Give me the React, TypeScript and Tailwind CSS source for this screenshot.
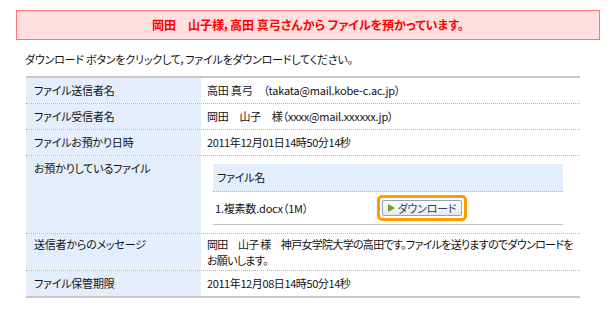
const rows: { label: string; value: React.ReactNode; kind?: 'files' | 'msg' }[] = [
  { label: 'ファイル送信者名', value: '高田 真弓　（takata@mail.kobe-c.ac.jp）' },
  { label: 'ファイル受信者名', value: '岡田　山子　様（xxxx@mail.xxxxxx.jp）' },
  { label: 'ファイルお預かり日時', value: <span className="tracking-[-0.4px]">2011年12月01日14時50分14秒</span> },
  { label: 'お預かりしているファイル', value: null, kind: 'files' },
  {
    label: '送信者からのメッセージ',
    value: (
      <>
        岡田　山子 様　神戸女学院大学の高田です。ファイルを送りますのでダウンロードを
        <br />
        お願いします。
      </>
    ),
    kind: 'msg',
  },
  { label: 'ファイル保管期限', value: <span className="tracking-[-0.4px]">2011年12月08日14時50分14秒</span> },
];

function DownloadButton() {
  return (
    <div className="inline-flex rounded-[5px] border-[3px] border-[#ff9a00] p-[2px]">
      <button className="flex h-[16px] w-[80px] items-center justify-center gap-[3px] rounded-[2px] border border-[#8ea3c2] bg-gradient-to-b from-white to-[#e4e9f0] text-[11px] leading-none text-[#2f3f5f]">
        <svg width="7" height="8" viewBox="0 0 7 8">
          <polygon points="0,0 7,4 0,8" fill="#6ea01e" />
        </svg>
        ダウンロード
      </button>
    </div>
  );
}

function FileTable() {
  return (
    <div className="ml-[12px] w-[350px] border-b border-[#c4c4c4]">
      <div className="flex h-[28px] items-center border-b border-dotted border-[#b4b4b4] bg-[#e4edfb] pl-[4px]">
        ファイル名
      </div>
      <div className="flex h-[32px] items-center pl-[2px]">
        <span className="w-[162px]">1.複素数.docx（1M）</span>
        <DownloadButton />
      </div>
    </div>
  );
}

export default function App() {
  return (
    <div
      className="h-[316px] w-[614px] bg-white text-[11px] tracking-[-0.2px] text-[#111] [font-feature-settings:'palt']"
      style={{ fontFamily: '"Noto Sans CJK JP", "Liberation Sans", sans-serif' }}
    >
      <div className="ml-[16px] mt-[10px] flex h-[30px] w-[584px] items-center justify-center border border-[#ff7474] bg-[#ffdfdf] text-[12px] font-bold tracking-normal text-[#ff0000]">
        岡田　山子様，高田 真弓さんから ファイルを預かっています。
      </div>

      <p className="ml-[25px] mt-[12px] leading-[14px]">
        ダウンロード ボタンをクリックして，ファイルをダウンロードしてください。
      </p>

      <div className="ml-[26px] mt-[10px] w-[554px] border-t-2 border-b-2 border-[#c8c8c8]">
        {rows.map((r, i) => (
          <div
            key={r.label}
            className={`flex ${i < rows.length - 1 ? 'border-b border-dotted border-[#b4b4b4]' : ''}`}
          >
            <div
              className={`w-[175px] shrink-0 bg-[#e4edfb] pl-[8px] ${
                r.kind === 'files' ? 'pt-[4px]' : r.kind === 'msg' ? 'pt-[2px] leading-[16px]' : 'flex h-[25px] items-center'
              }`}
            >
              {r.label}
            </div>
            <div
              className={`flex-1 ${
                r.kind === 'files'
                  ? 'py-[8px]'
                  : r.kind === 'msg'
                    ? 'whitespace-nowrap py-[2px] pl-[6px] leading-[16px] tracking-[-0.7px]'
                    : 'flex h-[25px] items-center pl-[6px]'
              }`}
            >
              {r.kind === 'files' ? <FileTable /> : r.value}
            </div>
          </div>
        ))}
      </div>
    </div>
  );
}
